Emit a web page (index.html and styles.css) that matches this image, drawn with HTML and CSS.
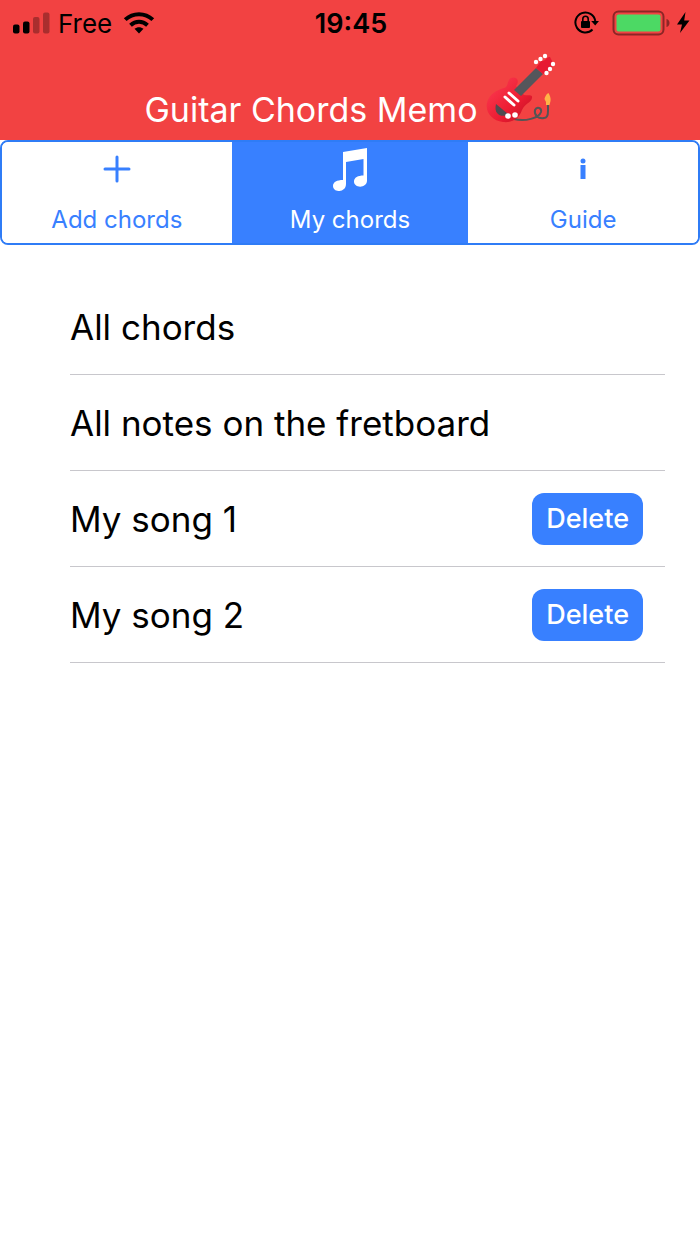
FILE: index.html
```html
<!DOCTYPE html>
<html lang="en">
<head>
    <meta charset="UTF-8">
    <meta name="viewport" content="width=device-width, initial-scale=1.0">
    <title>Guitar Chords Memo</title>
    <link rel="stylesheet" href="styles.css">
</head>
<body>
    <header class="header">
        <div class="status-bar">
            <div class="status-left">
                <svg class="signal" width="38" height="24" viewBox="0 0 38 24">
                    <rect x="1" y="13.500" width="6.500" height="9" rx="2"/>
                    <rect x="11" y="10.500" width="6.500" height="12" rx="2"/>
                    <rect x="21" y="6" width="6.500" height="16.500" rx="2" opacity="0.3"/>
                    <rect x="31" y="1.500" width="6.500" height="21" rx="2" opacity="0.3"/>
                </svg>
                <span>Free</span>
                <svg class="wifi" width="32" height="24" viewBox="0 0 32 24">
                    <g fill="none" stroke="#000" stroke-width="4">
                        <path d="M2.200 8.600C10 1.300 22 1.300 29.800 8.600"/>
                        <path d="M7.500 14.200C12.500 9.700 19.500 9.700 24.500 14.200"/>
                    </g>
                    <path d="M11.500 17.800C14 15.600 18 15.600 20.500 17.800L16 22.500Z"/>
                </svg>
            </div>
            <span class="time">19:45</span>
            <div class="status-right">
                <svg width="26" height="24" viewBox="0 0 26 24">
                    <path d="M18.500 18.500A10 10 0 1 1 21.300 10" fill="none" stroke="#000" stroke-width="2"/>
                    <path d="M17.200 10H25L21.200 14.500Z"/>
                    <rect x="7" y="10" width="9" height="7" rx="1"/>
                    <path d="M8.800 11V8a2.700 2.700 0 0 1 5.400 0V11" fill="none" stroke="#000" stroke-width="1.600"/>
                </svg>
                <svg width="58" height="26" viewBox="0 0 58 26">
                    <rect x="1.500" y="1.500" width="50" height="23" rx="5" fill="none" stroke="#8c2626" stroke-width="2"/>
                    <rect x="4.500" y="4.500" width="44" height="17" rx="2" fill="#4cd964"/>
                    <path d="M54.500 9C58.500 10 58.500 16 54.500 17Z" fill="#8c2626"/>
                </svg>
                <svg width="14" height="24" viewBox="0 0 14 24">
                    <path d="M9.500 1L1 13.500H6L4 22L13.500 9.500H8.200Z"/>
                </svg>
            </div>
        </div>
        <div class="title">
            <h1>Guitar Chords Memo</h1>
            <svg class="guitar" width="72" height="76" viewBox="2 0 72 76">
                <defs>
                    <linearGradient id="body" x1="0" y1="0" x2="1" y2="1">
                        <stop offset="0" stop-color="#ff3f55"/>
                        <stop offset="0.6" stop-color="#ec1c32"/>
                        <stop offset="1" stop-color="#bd0f22"/>
                    </linearGradient>
                </defs>
                <path d="M32 67C43 70 57 66 59 60C60 56 55 54 53 58C52 63 56 67 62 66C66 66 66 62 66 59V52" fill="none" stroke="#555" stroke-width="2"/>
                <path d="M64 53V50L62.500 47C63 45 64 42 66.500 41C68 44 69 46 68.500 49L67.500 53Z" fill="#ffb347"/>
                <path d="M27 28C30 23 40 26 34 34L42 43C46 44 51 42 50 46C49 51 43 51 40 58C37 67 30 71 21 70C10 69 3 60 5 51C7 42 15 38 22 36C26 35 25 31 27 28Z" fill="url(#body)"/>
                <path d="M14 52L26 62C22 66 11 64 14 52Z" fill="#514b51"/>
                <path d="M32 38L54 16L61 22L39 44Z" fill="#55565b"/>
                <path d="M54 16L59 9C63 10 65 4 68 5L70 9C71 12 70 14 70 17L61 22Z" fill="#e71932"/>
                <g stroke="#fff" stroke-width="3" stroke-linecap="round">
                    <path d="M27 41L36 49"/>
                    <path d="M23 45L32 53"/>
                </g>
                <g fill="#fff">
                    <circle cx="54" cy="10" r="2.200"/>
                    <circle cx="58.500" cy="7" r="2.200"/>
                    <circle cx="63" cy="4" r="2.200"/>
                    <circle cx="64.500" cy="21" r="2.200"/>
                    <circle cx="68" cy="17" r="2.200"/>
                    <circle cx="71" cy="12" r="2.200"/>
                    <circle cx="26" cy="64" r="2.800"/>
                    <circle cx="33" cy="63" r="2.800"/>
                </g>
            </svg>
        </div>
    </header>

    <nav class="tabs">
        <button type="button" class="tab">
            <svg width="40" height="44" viewBox="0 0 40 44">
                <path d="M20 10V34M8 22H32" stroke="currentColor" stroke-width="3" stroke-linecap="round"/>
            </svg>
            Add chords
        </button>
        <button type="button" class="tab active">
            <svg width="40" height="44" viewBox="0 0 40 44" fill="currentColor">
                <path d="M13 5L37 1V33.500C37 41.500 24 41.500 24 34.500C24 30.500 28 28.500 33.500 28.500V12L16 15V37C16 46 3 46 3 39C3 35 7 33 13 33Z"/>
            </svg>
            My chords
        </button>
        <button type="button" class="tab">
            <svg width="40" height="44" viewBox="0 0 40 44" fill="currentColor">
                <circle cx="20" cy="14" r="2.500"/>
                <rect x="17.500" y="18" width="5" height="14"/>
            </svg>
            Guide
        </button>
    </nav>

    <main>
        <ul class="list">
            <li class="row">All chords</li>
            <li class="row">All notes on the fretboard</li>
            <li class="row">My song 1 <button type="button" class="delete">Delete</button></li>
            <li class="row">My song 2 <button type="button" class="delete">Delete</button></li>
        </ul>
    </main>
</body>
</html>
```

FILE: styles.css
```css
body {
    margin: 0;
    background: #fff;
    color: #000;
    font-family: Inter, Roboto, sans-serif;
}
button {
    font-family: inherit;
    cursor: pointer;
}
svg {
    flex: none;
}
.header {
    background: #f24242;
}
.status-bar {
    display: grid;
    grid-template-columns: 1fr auto 1fr;
    align-items: center;
    height: 46px;
    padding: 0 10px 0 12px;
    font-size: 26px;
}
.status-left,
.status-right {
    display: flex;
    align-items: center;
    gap: 8px;
}
.status-right {
    justify-content: flex-end;
    gap: 6px;
}
.wifi {
    margin-left: 3px;
}
.status-right svg:first-child {
    margin-right: 6px;
}
.time {
    font-size: 27px;
    font-weight: 600;
}
.title {
    display: flex;
    justify-content: center;
    align-items: flex-end;
    gap: 6px;
    height: 94px;
}
.title h1 {
    margin: 0 0 10px;
    color: #fff;
    font-size: 34px;
    font-weight: 400;
    line-height: 40px;
}
.guitar {
    margin-bottom: 12px;
}
.tabs {
    display: grid;
    grid-template-columns: 33fr 34fr 33fr;
    border: 2px solid #2f7cf6;
    border-radius: 8px;
    overflow: hidden;
}
.tab {
    display: flex;
    flex-direction: column;
    align-items: center;
    gap: 13px;
    padding: 5px 0 7px;
    border: none;
    background: #fff;
    color: #3880ff;
    font-size: 24px;
    line-height: 32px;
}
.tab.active {
    background: #3880ff;
    color: #fff;
}
.list {
    list-style: none;
    margin: 34px 35px 0 70px;
    padding: 0;
}
.row {
    display: flex;
    justify-content: space-between;
    align-items: center;
    height: 95px;
    padding-right: 22px;
    border-bottom: 1px solid #c8c7cc;
    font-size: 35px;
}
.delete {
    padding: 10px 14px;
    border: none;
    border-radius: 12px;
    background: #3880ff;
    color: #fff;
    font-size: 27px;
    font-weight: 500;
    line-height: 32px;
}
```
